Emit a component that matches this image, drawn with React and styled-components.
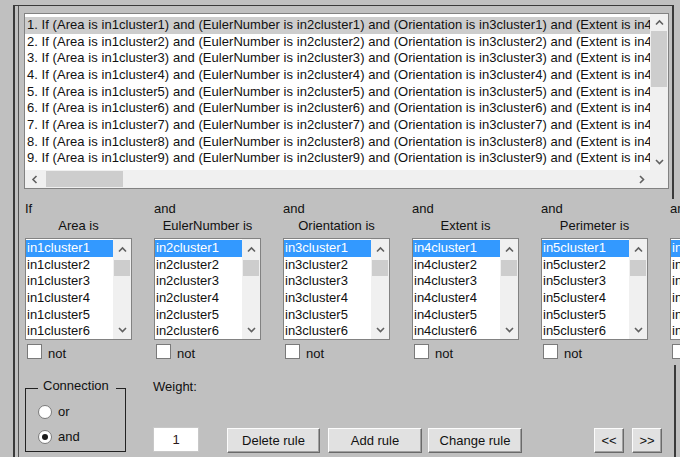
import React from 'react';
import styled, { createGlobalStyle } from 'styled-components';

const Global = createGlobalStyle`
  html, body { margin: 0; padding: 0; }
  body {
    background: #c0c0c0;
    font-family: "Liberation Sans", Arial, sans-serif;
    font-size: 13px;
    color: #111;
  }
`;

const ROW_H = 16.67;

const inputs = [
  { conn: 'If', name: 'Area', idx: 1 },
  { conn: 'and', name: 'EulerNumber', idx: 2 },
  { conn: 'and', name: 'Orientation', idx: 3 },
  { conn: 'and', name: 'Extent', idx: 4 },
  { conn: 'and', name: 'Perimeter', idx: 5 },
  { conn: 'and', name: 'Solidity', idx: 6 },
];

const rules = Array.from({ length: 9 }, (_, i) => {
  const k = i + 1;
  return `${k}. If (Area is in1cluster${k}) and (EulerNumber is in2cluster${k}) and (Orientation is in3cluster${k}) and (Extent is in4cluster${k}) and (Perimeter is in5cluster${k}) and (Solidity is in6cluster${k}) then (Class is out1cluster${k}) (1)`;
});

/* ---------- window frame ---------- */

const Page = styled.div`
  width: 680px;
  height: 457px;
  overflow: hidden;
  box-sizing: border-box;
  padding: 5px 0 0 13px;
  background: #c0c0c0;
`;

const Frame = styled.div`
  width: 661px;
  height: 452px;
  box-sizing: border-box;
  border-left: 2px solid #3a3a3a;
  border-top: 1px solid #3a3a3a;
  padding-left: 3px;
`;

const Inner = styled.div`
  height: 100%;
  box-sizing: border-box;
  border-left: 1px solid #555;
  padding-left: 5px;
  display: flex;
  flex-direction: column;
`;

/* ---------- rule list ---------- */

const RuleSection = styled.div`
  width: 650px;
  box-sizing: border-box;
  border-right: 2px solid #3a3a3a;
  padding: 7px 3px 10px 0;
`;

const RuleList = styled.div`
  height: 176px;
  box-sizing: border-box;
  border: 1px solid #828282;
  background: #fff;
  display: grid;
  grid-template-columns: 1fr 18px;
  grid-template-rows: 1fr 18px;
`;

const RuleRows = styled.div`
  overflow: hidden;
  padding-top: 3px;
`;

const RuleRow = styled.div`
  height: ${ROW_H}px;
  line-height: ${ROW_H}px;
  padding-left: 2px;
  white-space: nowrap;
  letter-spacing: 0.05px;
  background: ${(p) => (p.$selected ? '#cdcdcd' : 'transparent')};
`;

const VScroll = styled.div`
  background: #f0f0f0;
  display: flex;
  flex-direction: column;
`;

const HScroll = styled.div`
  background: #f0f0f0;
  display: flex;
  align-items: stretch;
`;

const Corner = styled.div`
  background: #f0f0f0;
`;

const ArrowCell = styled.div`
  flex: 0 0 ${(p) => p.$size || 17}px;
  display: flex;
  align-items: center;
  justify-content: center;
`;

const Thumb = styled.div`
  background: #cdcdcd;
  flex: 0 0 ${(p) => p.$len}px;
  margin: ${(p) => p.$margin || '0'};
`;

const Track = styled.div`
  flex: 1;
`;

const Chevron = ({ dir }) => {
  const pts = {
    up: '1,5.5 4.5,2 8,5.5',
    down: '1,2 4.5,5.5 8,2',
    left: '5.5,1 2,4.5 5.5,8',
    right: '2,1 5.5,4.5 2,8',
  }[dir];
  const vertical = dir === 'up' || dir === 'down';
  return (
    <svg width={vertical ? 9 : 7} height={vertical ? 7 : 9} viewBox={vertical ? '0 0 9 7' : '0 0 7 9'}>
      <polyline points={pts} fill="none" stroke="#606060" strokeWidth="1.6" />
    </svg>
  );
};

/* ---------- input columns ---------- */

const Columns = styled.div`
  display: flex;
  gap: 22px;
  margin-left: 1px;
`;

const Column = styled.div`
  flex: 0 0 107px;
  width: 107px;
  display: flex;
  flex-direction: column;
`;

const ConnLabel = styled.div`
  line-height: 15px;
  height: 15px;
  margin-top: 2px;
  white-space: nowrap;
`;

const VarLabel = styled.div`
  line-height: 15px;
  height: 15px;
  margin-top: 2px;
  text-align: center;
  white-space: nowrap;
`;

const MfList = styled.div`
  margin-top: 5px;
  height: 102px;
  box-sizing: border-box;
  border: 1px solid #828282;
  background: #fff;
  display: flex;
`;

const MfRows = styled.div`
  flex: 1;
  overflow: hidden;
  padding-top: 1px;
`;

const MfRow = styled.div`
  height: ${ROW_H}px;
  line-height: ${ROW_H}px;
  padding-left: 1px;
  white-space: nowrap;
  background: ${(p) => (p.$selected ? '#3399ff' : 'transparent')};
  color: ${(p) => (p.$selected ? '#fff' : '#111')};
`;

const MfScroll = styled.div`
  flex: 0 0 18px;
  background: #f0f0f0;
  display: flex;
  flex-direction: column;
`;

const NotRow = styled.label`
  margin-top: 4px;
  height: 15px;
  display: flex;
  align-items: center;
  gap: 6px;
  padding-left: 2px;
`;

const NotText = styled.span`
  padding-top: 3px;
  line-height: 15px;
`;

const CheckBox = styled.span`
  width: 13px;
  height: 13px;
  background: #fff;
  border: 1px solid #7a7a7a;
  flex: 0 0 auto;
`;

/* ---------- bottom controls ---------- */

const Bottom = styled.div`
  flex: 1;
  width: 651px;
  box-sizing: border-box;
  margin-left: 1px;
  margin-top: 6px;
  border-right: 2px solid #3a3a3a;
  display: flex;
  align-items: flex-start;
`;

const Group = styled.fieldset`
  margin: 16px 0 0 0;
  padding: 0 0 0 12px;
  width: 101px;
  height: 71px;
  box-sizing: border-box;
  border: 1px solid #222;
  display: flex;
  flex-direction: column;
  gap: 10px;
`;

/* caption sits on the top border, nudged a little above it */
const GroupTitle = styled.legend`
  padding: 0 7px 0 5px;
  line-height: 15px;
  position: relative;
  top: -3px;
`;

const RadioRow = styled.label`
  display: flex;
  align-items: center;
  gap: 6px;
  height: 15px;
  margin-top: ${(p) => p.$top || 0}px;
`;

const Radio = styled.span`
  width: 12px;
  height: 12px;
  border-radius: 50%;
  border: 1px solid #7a7a7a;
  background: #fff;
  display: flex;
  align-items: center;
  justify-content: center;
  &::after {
    content: '';
    width: 6px;
    height: 6px;
    border-radius: 50%;
    background: ${(p) => (p.$on ? '#1a1a1a' : 'transparent')};
  }
`;

const WeightBlock = styled.div`
  margin-left: 27px;
  margin-top: 14px;
  height: 73px;
  display: flex;
  flex-direction: column;
  justify-content: space-between;
`;

const WeightLabel = styled.div`
  line-height: 15px;
`;

const WeightInput = styled.div`
  width: 46px;
  height: 25px;
  box-sizing: border-box;
  background: #fff;
  border: 1px solid #c8c8c8;
  display: flex;
  align-items: center;
  justify-content: center;
  color: #2a1a1a;
`;

const Button = styled.button`
  margin-top: 63px;
  margin-left: ${(p) => p.$gap}px;
  width: ${(p) => p.$w}px;
  height: 25px;
  box-sizing: border-box;
  font: inherit;
  color: #111;
  background: #e1e1e1;
  border: 1px solid;
  border-color: #fcfcfc #6a6a6a #6a6a6a #fcfcfc;
  box-shadow: inset -1px -1px 0 #a0a0a0;
  padding: 0;
  line-height: 22px;
  text-align: center;
`;

export default function App() {
  return (
    <>
      <Global />
      <Page>
        <Frame>
          <Inner>
            <RuleSection>
              <RuleList>
                <RuleRows>
                  {rules.map((r, i) => (
                    <RuleRow key={r} $selected={i === 0}>{r}</RuleRow>
                  ))}
                </RuleRows>
                <VScroll>
                  <ArrowCell><Chevron dir="up" /></ArrowCell>
                  <Thumb $len={56} $margin="0 1px" />
                  <Track />
                  <ArrowCell><Chevron dir="down" /></ArrowCell>
                </VScroll>
                <HScroll>
                  <ArrowCell $size={18}><Chevron dir="left" /></ArrowCell>
                  <Thumb $len={77} $margin="1px 0 1px 3px" />
                  <Track />
                  <ArrowCell $size={18}><Chevron dir="right" /></ArrowCell>
                </HScroll>
                <Corner />
              </RuleList>
            </RuleSection>

            <Columns>
              {inputs.map((inp) => (
                <Column key={inp.name}>
                  <ConnLabel>{inp.conn}</ConnLabel>
                  <VarLabel>{inp.name} is</VarLabel>
                  <MfList>
                    <MfRows>
                      {Array.from({ length: 7 }, (_, j) => (
                        <MfRow key={j} $selected={j === 0}>{`in${inp.idx}cluster${j + 1}`}</MfRow>
                      ))}
                    </MfRows>
                    <MfScroll>
                      <ArrowCell $size={20}><Chevron dir="up" /></ArrowCell>
                      <Thumb $len={16} $margin="1px 1px 0" />
                      <Track />
                      <ArrowCell $size={20}><Chevron dir="down" /></ArrowCell>
                    </MfScroll>
                  </MfList>
                  <NotRow>
                    <CheckBox />
                    <NotText>not</NotText>
                  </NotRow>
                </Column>
              ))}
            </Columns>

            <Bottom>
              <Group>
                <GroupTitle>Connection</GroupTitle>
                <RadioRow $top={8}><Radio /> or</RadioRow>
                <RadioRow><Radio $on /> and</RadioRow>
              </Group>
              <WeightBlock>
                <WeightLabel>Weight:</WeightLabel>
                <WeightInput>1</WeightInput>
              </WeightBlock>
              <Button $gap={28} $w={93}>Delete rule</Button>
              <Button $gap={8} $w={94}>Add rule</Button>
              <Button $gap={6} $w={94}>Change rule</Button>
              <Button $gap={72} $w={30}>&lt;&lt;</Button>
              <Button $gap={8} $w={30}>&gt;&gt;</Button>
            </Bottom>
          </Inner>
        </Frame>
      </Page>
    </>
  );
}
